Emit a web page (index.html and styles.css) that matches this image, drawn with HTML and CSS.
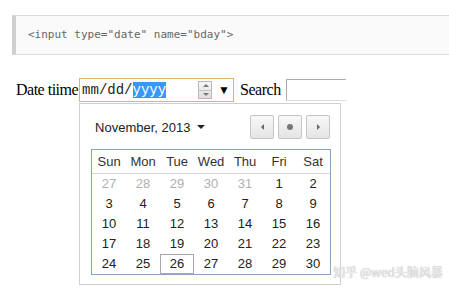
FILE: index.html
```html
<!DOCTYPE html>
<html lang="en">
<head>
    <meta charset="UTF-8">
    <meta name="viewport" content="width=device-width, initial-scale=1.0">
    <title>Date input</title>
    <link rel="stylesheet" href="styles.css">
</head>
<body>
    <pre class="code-block">&lt;input type="date" name="bday"&gt;</pre>

    <div class="form-row">
        <span class="label">Date tiime</span>
        <div class="date-field">
            <span class="date-text">mm/dd/<span class="selected">yyyy</span></span>
            <span class="spinner">
                <span class="spin-up"></span>
                <span class="spin-down"></span>
            </span>
            <span class="drop-arrow">&#9660;</span>

            <!-- calendar popup -->
            <div class="picker">
                <div class="picker-head">
                    <span class="month">November, 2013 <span class="caret"></span></span>
                    <div class="nav">
                        <button class="nav-btn"><span class="tri-left"></span></button>
                        <button class="nav-btn"><span class="dot"></span></button>
                        <button class="nav-btn"><span class="tri-right"></span></button>
                    </div>
                </div>
                <div class="calendar">
                    <div class="week head">
                        <span>Sun</span><span>Mon</span><span>Tue</span><span>Wed</span><span>Thu</span><span>Fri</span><span>Sat</span>
                    </div>
                    <div class="week">
                        <span class="muted">27</span><span class="muted">28</span><span class="muted">29</span><span class="muted">30</span><span class="muted">31</span><span>1</span><span>2</span>
                    </div>
                    <div class="week">
                        <span>3</span><span>4</span><span>5</span><span>6</span><span>7</span><span>8</span><span>9</span>
                    </div>
                    <div class="week">
                        <span>10</span><span>11</span><span>12</span><span>13</span><span>14</span><span>15</span><span>16</span>
                    </div>
                    <div class="week">
                        <span>17</span><span>18</span><span>19</span><span>20</span><span>21</span><span>22</span><span>23</span>
                    </div>
                    <div class="week">
                        <span>24</span><span>25</span><span class="today">26</span><span>27</span><span>28</span><span>29</span><span>30</span>
                    </div>
                </div>
            </div>
        </div>
        <span class="label search-label">Search</span>
        <span class="search-box"></span>
    </div>

    <div class="watermark">知乎 @wed头脑风暴</div>
</body>
</html>
```

FILE: styles.css
```css
body {
    margin: 0;
    padding: 15px 0 0 12px;
    font-family: 'Liberation Serif', serif;
    font-size: 16px;
    color: #000;
    background: #fff;
    position: relative;
    height: 277px;
    overflow: hidden;
}

.code-block {
    margin: 0;
    box-sizing: border-box;
    height: 40px;
    padding: 11px 0 0 12px;
    background: #fafafa;
    border-top: 1px solid #dcdcdc;
    border-bottom: 1px solid #dcdcdc;
    border-left: 4px solid #cfcfcf;
    font-family: 'DejaVu Sans Mono', monospace;
    font-size: 11px;
    line-height: 16px;
    color: #666;
}

.form-row {
    display: flex;
    align-items: center;
    margin-top: 22px;
    padding-left: 4px;
    height: 26px;
}

.label {
    white-space: nowrap;
    letter-spacing: -0.5px;
}

.date-field {
    position: relative;
    display: flex;
    align-items: center;
    width: 155px;
    height: 24px;
    box-sizing: border-box;
    margin-left: 1px;
    border: 1px solid #d8b66e;
    padding-left: 2px;
}

.date-text {
    font-family: 'Liberation Mono', monospace;
    font-size: 14px;
    line-height: 19px;
    width: 116px;
    color: #222;
}

.selected {
    background: #3399ff;
    color: #fff;
}

.spinner {
    display: flex;
    flex-direction: column;
    width: 14px;
    height: 18px;
    border: 1px solid #b8b8b8;
    background: linear-gradient(#f6f6f6, #dedede);
    box-sizing: border-box;
}

.spin-up, .spin-down {
    flex: 1;
    position: relative;
}

.spin-up {
    border-bottom: 1px solid #c4c4c4;
}

.spin-up::after, .spin-down::after {
    content: '';
    position: absolute;
    left: 4px;
    top: 2px;
    border-left: 3px solid transparent;
    border-right: 3px solid transparent;
}

.spin-up::after {
    border-bottom: 3px solid #777;
}

.spin-down::after {
    border-top: 3px solid #777;
}

.drop-arrow {
    font-size: 12px;
    margin-left: 6px;
    line-height: 1;
}

.search-label {
    margin-left: 6px;
}

.search-box {
    display: block;
    width: 60px;
    height: 22px;
    box-sizing: border-box;
    margin-left: 5px;
    border: 1px solid #ababab;
    border-right: none;
    border-bottom-color: #dcdcdc;
}

.picker {
    position: absolute;
    top: 24px;
    left: -1px;
    width: 262px;
    height: 182px;
    box-sizing: border-box;
    background: #fff;
    border: 1px solid #cfcfcf;
    padding: 11px 10px 0 11px;
    font-family: 'Liberation Sans', Arial, sans-serif;
    font-size: 13px;
    color: #222;
    z-index: 5;
}

.picker-head {
    display: flex;
    justify-content: space-between;
    align-items: center;
    height: 24px;
    padding-left: 4px;
}

.month {
    display: flex;
    align-items: center;
    gap: 6px;
}

.caret {
    border-left: 4px solid transparent;
    border-right: 4px solid transparent;
    border-top: 4px solid #222;
}

.nav {
    display: flex;
    gap: 4px;
}

.nav-btn {
    width: 24px;
    height: 24px;
    padding: 0;
    border: 1px solid #c6c6c6;
    border-radius: 2px;
    background: linear-gradient(#f8f8f8, #e4e4e4);
    display: flex;
    align-items: center;
    justify-content: center;
}

.tri-left {
    border-top: 3px solid transparent;
    border-bottom: 3px solid transparent;
    border-right: 3px solid #666;
}

.tri-right {
    border-top: 3px solid transparent;
    border-bottom: 3px solid transparent;
    border-left: 3px solid #666;
}

.dot {
    width: 6px;
    height: 6px;
    border-radius: 50%;
    background: #777;
}

.calendar {
    margin-top: 10px;
    width: 240px;
    box-sizing: border-box;
    border: 1px solid #86a6c8;
}

.week {
    display: grid;
    grid-template-columns: repeat(7, 34px);
    height: 20px;
    line-height: 20px;
    text-align: center;
}

.week.head {
    height: 23px;
    line-height: 23px;
    border-bottom: 1px solid #d6d6d6;
    color: #333;
}

.muted {
    color: #b0b0b0;
}

.today {
    box-sizing: border-box;
    border: 1px solid #a8a8a8;
    line-height: 18px;
}

.watermark {
    position: absolute;
    right: 6px;
    bottom: 12px;
    font-family: 'Noto Sans CJK SC', sans-serif;
    font-size: 12px;
    color: #ececec;
    text-shadow: 0 0 1px #999;
    z-index: 10;
}
```
